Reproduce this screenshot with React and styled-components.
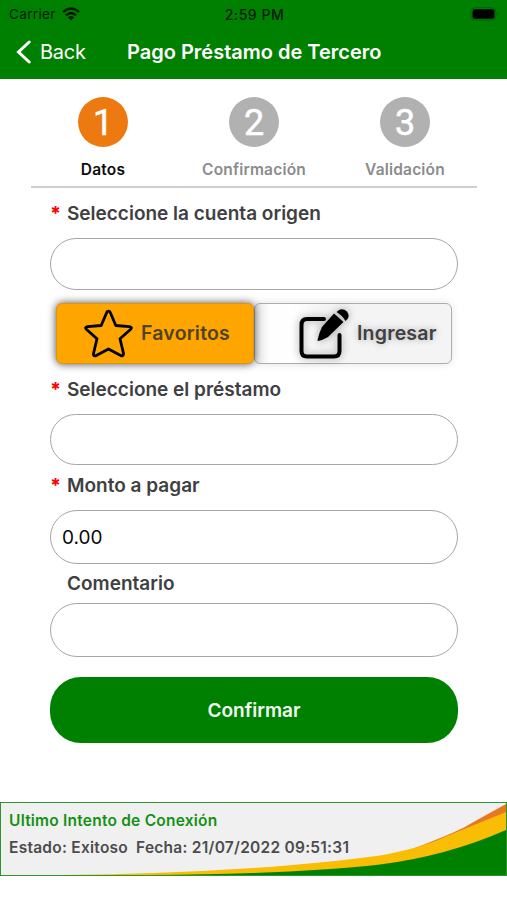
import React from 'react';
import styled, { createGlobalStyle } from 'styled-components';

const GlobalStyle = createGlobalStyle`
  *, *::before, *::after { box-sizing: border-box; }
  body {
    margin: 0;
    background: #fff;
    font-family: Inter, "Liberation Sans", sans-serif;
    color: #404042;
  }
  button, input { font: inherit; }
`;

const Screen = styled.div`
  width: 507px;
  height: 900px;
  overflow: hidden;
  display: flex;
  flex-direction: column;
  background: #fff;
`;

const Header = styled.header`
  height: 79px;
  flex: none;
  background: #008000;
`;

const StatusBar = styled.div`
  height: 27px;
  padding: 0 7px 0 9px;
  display: grid;
  grid-template-columns: 1fr auto 1fr;
  align-items: center;
  color: #001c00;
  line-height: 27px;
`;

const Carrier = styled.span`
  display: flex;
  align-items: center;
  gap: 6px;
  padding-top: 1px;
  font-size: 13.5px;
  letter-spacing: 0.35px;
`;

const WifiIcon = styled.svg`
  margin-top: -2px;
`;

const Clock = styled.span`
  padding-top: 1px;
  font-size: 14px;
  font-weight: 500;
  letter-spacing: 0.55px;
`;

const BatteryIcon = styled.svg`
  justify-self: end;
`;

const NavBar = styled.div`
  height: 50px;
  padding-left: 16px;
  display: flex;
  align-items: center;
  color: #fff;
`;

const BackButton = styled.button`
  width: 111px;
  padding: 0;
  border: 0;
  background: none;
  color: inherit;
  display: flex;
  align-items: center;
  gap: 9px;
  font-size: 20px;
  letter-spacing: -0.25px;
`;

const Title = styled.h1`
  margin: 0;
  font-size: 20px;
  font-weight: 600;
  white-space: nowrap;
`;

const Steps = styled.ol`
  list-style: none;
  margin: 0 30px 0 31px;
  padding: 18px 0 0;
  height: 109px;
  flex: none;
  display: flex;
  justify-content: space-between;
  border-bottom: 2px solid #cfcfcf;
`;

const Step = styled.li`
  width: 144px;
  display: flex;
  flex-direction: column;
  align-items: center;
  font-size: 15.5px;
  font-weight: 600;
  line-height: 20px;
  letter-spacing: 0.18px;
  color: ${(p) => (p.$active ? '#0c0c0c' : '#8b8b8b')};
`;

const StepNumber = styled.span`
  width: 50px;
  height: 50px;
  margin-bottom: 13px;
  border-radius: 50%;
  background: ${(p) => (p.$active ? '#ec7a10' : '#b1b1b1')};
  color: #fff;
  font-family: Roboto, sans-serif;
  font-size: 36px;
  font-weight: 400;
  line-height: 52px;
  letter-spacing: 0;
  text-align: center;
  -webkit-text-stroke: 0.5px #fff;
`;

const Form = styled.form`
  width: 408px;
  margin: 0 0 0 50px;
  flex: none;
  display: flex;
  flex-direction: column;
`;

const Label = styled.label`
  height: ${(p) => p.$height}px;
  padding-top: ${(p) => p.$drop || 0}px;
  padding-bottom: ${(p) => p.$lift || 0}px;
  display: flex;
  align-items: center;
  font-size: 19px;
  font-weight: 600;
  line-height: 24px;
`;

const Required = styled.span`
  width: 17px;
  flex: none;
  color: #f00;
  font-weight: 800;
`;

const Field = styled.input`
  width: 100%;
  height: ${(p) => p.$height}px;
  padding: 1px 11px 0;
  border: 1.5px solid #a6a6a6;
  border-radius: 27px;
  background: #fff;
  color: #0a0a0a;
  font-size: 19px;
  outline: none;
`;

const Toggle = styled.div`
  margin: 13px 6px 0;
  height: 61px;
  display: flex;
`;

const ToggleOption = styled.button`
  flex: 1 1 0;
  min-width: 0;
  padding: 0;
  display: flex;
  align-items: center;
  border: 1.5px solid ${(p) => (p.$selected ? '#dc9416' : '#adadad')};
  border-radius: 6px;
  background: ${(p) =>
    p.$selected
      ? '#ffa500'
      : 'linear-gradient(90deg, #e4e4e4 0, #fdfdfd 14px, #fff 36px, #f4f4f4 70px, #f4f4f4 100%)'};
  box-shadow: ${(p) =>
    p.$selected ? '0 0 9px rgba(0, 0, 0, 0.7)' : '0 0 9px rgba(0, 0, 0, 0.12)'};
  position: relative;
  z-index: ${(p) => (p.$selected ? 1 : 0)};
  color: ${(p) => (p.$selected ? '#514223' : '#404042')};
  text-shadow: ${(p) => (p.$selected ? 'none' : '0 0 7px rgba(0, 0, 0, 0.3)')};
  font-size: 19.5px;
  font-weight: 600;
  line-height: 22px;
  letter-spacing: 0.2px;
`;

const OptionContent = styled.span`
  display: flex;
  align-items: center;
  gap: 8px;
  margin-left: ${(p) => p.$inset}px;
`;

const OptionText = styled.span`
  padding-bottom: 2px;
`;

const PencilIcon = styled.svg`
  flex: none;
  overflow: visible;
  filter: drop-shadow(0 0 4px rgba(0, 0, 0, 0.35));
`;

const Submit = styled.button`
  height: 66px;
  margin-top: 20px;
  border: 0;
  border-radius: 31px;
  background: #008000;
  color: #f3fff3;
  font-size: 19px;
  font-weight: 600;
`;

const LastLogin = styled.footer`
  position: relative;
  height: 74px;
  margin-top: 59px;
  flex: none;
  padding: 7px 8px;
  border: 1.5px solid #2c952c;
  background: #f0f0f0;
`;

const Swoosh = styled.svg`
  position: absolute;
  right: 0;
  bottom: 0;
`;

const LoginTitle = styled.div`
  position: relative;
  font-size: 15.5px;
  font-weight: 600;
  line-height: 22px;
  letter-spacing: 0.22px;
  color: #159015;
`;

const LoginDetail = styled.div`
  position: relative;
  display: flex;
  gap: 8px;
  margin-top: 5px;
  font-size: 15.5px;
  font-weight: 600;
  line-height: 22px;
  letter-spacing: 0.25px;
  color: #4c4c4e;
`;

const STEPS = ['Datos', 'Confirmación', 'Validación'];

function WifiGlyph() {
  return (
    <WifiIcon width="18" height="14" viewBox="0 0 18 14" fill="none" stroke="currentColor" strokeWidth="2.5">
      <path d="M1 5.1Q9-2.1 17 5.1" />
      <path d="M3.9 8.4Q9 3.9 14.1 8.4" />
      <path d="M9 13.5 5.9 10.2Q9 7.9 12.1 10.2Z" fill="currentColor" stroke="none" />
    </WifiIcon>
  );
}

export default function App() {
  return (
    <>
      <GlobalStyle />
      <Screen>
        <Header>
          <StatusBar>
            <Carrier>
              Carrier
              <WifiGlyph />
            </Carrier>
            <Clock>2:59 PM</Clock>
            <BatteryIcon width="30" height="14" viewBox="0 0 30 14">
              <rect x="1" y="0.8" width="25" height="12.4" rx="4" fill="none" stroke="#006200" />
              <rect x="2.5" y="2.3" width="22" height="9.4" rx="2.5" fill="#000" />
              <path d="M27.5 5v4q1.5-.6 1.5-2t-1.5-2z" fill="#006200" />
            </BatteryIcon>
          </StatusBar>
          <NavBar>
            <BackButton type="button">
              <svg width="15" height="24" viewBox="0 0 15 24" fill="none" stroke="#fff" strokeWidth="3">
                <path d="M13.2 2 2.5 12l10.7 10" strokeLinecap="round" strokeLinejoin="miter" />
              </svg>
              Back
            </BackButton>
            <Title>Pago Préstamo de Tercero</Title>
          </NavBar>
        </Header>

        <Steps>
          {STEPS.map((name, i) => (
            <Step key={name} $active={i === 0}>
              <StepNumber $active={i === 0}>{i + 1}</StepNumber>
              {name}
            </Step>
          ))}
        </Steps>

        <Form>
          <Label $height={50} $drop={2} htmlFor="cuenta">
            <Required>*</Required>Seleccione la cuenta origen
          </Label>
          <Field id="cuenta" $height={52} />
          <Toggle>
            <ToggleOption type="button" $selected>
              <OptionContent $inset={27}>
                <svg width="49" height="49" viewBox="0 0 49 49" fill="none" stroke="#000" strokeWidth="2.8" strokeLinejoin="round">
                  <path d="M24.5 2.2Q25.8 2.2 26.3 3.5L31.8 16.5 45.5 17.7Q48.5 18.5 46.7 20.2L36 29.7 39.5 44.5Q39.5 47.5 37.2 46.8L24.5 40 11.8 46.8Q9 47.5 9.5 44.5L13 29.7 2.3 20.2Q.5 18.5 3.5 17.7L17.2 16.5 22.7 3.5Q23.2 2.2 24.5 2.2Z" />
                </svg>
                <OptionText>Favoritos</OptionText>
              </OptionContent>
            </ToggleOption>
            <ToggleOption type="button">
              <OptionContent $inset={44}>
                <PencilIcon width="50" height="50" viewBox="0 0 50 50">
                  <path
                    d="M25 10H8Q2.500 10 2.500 16V42Q2.500 47.500 8 47.500H35Q40.500 47.500 40.500 42V26"
                    fill="none"
                    stroke="#000"
                    strokeWidth="4"
                    strokeLinecap="round"
                  />
                  <path d="M35 4.500 44.500 13 29 28Q24 31 19 32Q18.500 32 18.500 31Q20 24 23 18Z" fill="#000" />
                  <path d="M37.500 3 40 1Q44-1 48 2.500Q51 7 48.500 10L46.500 12Q43.500 6.500 37.500 3Z" fill="#000" />
                </PencilIcon>
                <OptionText>Ingresar</OptionText>
              </OptionContent>
            </ToggleOption>
          </Toggle>
          <Label $height={50} $drop={2} htmlFor="prestamo">
            <Required>*</Required>Seleccione el préstamo
          </Label>
          <Field id="prestamo" $height={51} />
          <Label $height={45} $lift={4} htmlFor="monto">
            <Required>*</Required>Monto a pagar
          </Label>
          <Field id="monto" $height={54} defaultValue="0.00" />
          <Label $height={39} $drop={1} htmlFor="comentario">
            <Required />Comentario
          </Label>
          <Field id="comentario" $height={54} />
          <Submit type="button">Confirmar</Submit>
        </Form>

        <LastLogin>
          <Swoosh width="504" height="71" viewBox="0 0 504 71">
            <path d="M504 0Q482 12 461 24Q440 34 410 45L445 40 504 12Z" fill="#e87722" />
            <path d="M60 71Q160 70 251 64Q325 59 378 51.500Q420 44 445 32L504 8V71Z" fill="#f9bd05" />
            <path d="M90 71Q180 71.500 251 69Q325 66.500 378 60.500Q445 52 504 26V71Z" fill="#008000" />
          </Swoosh>
          <LoginTitle>Ultimo Intento de Conexión</LoginTitle>
          <LoginDetail>
            <span>Estado: Exitoso</span>
            <span>Fecha: 21/07/2022 09:51:31</span>
          </LoginDetail>
        </LastLogin>
      </Screen>
    </>
  );
}
